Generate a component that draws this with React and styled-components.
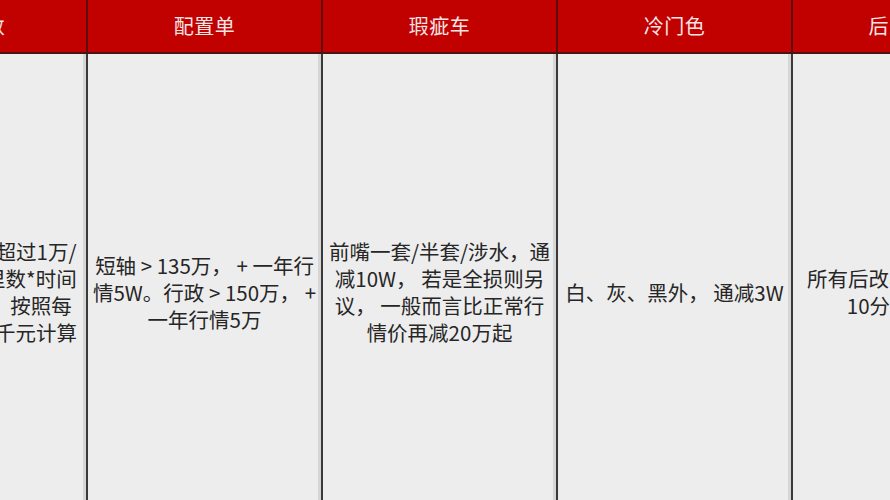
import React from "react";
import styled, { createGlobalStyle } from "styled-components";

const Global = createGlobalStyle`
  html, body { margin: 0; padding: 0; background: #ededed; }
  body { font-family: "Noto Sans CJK SC", "Noto Sans", sans-serif; }
`;

const Page = styled.div`
  width: 890px;
  height: 500px;
  overflow: hidden;
  background: #ededed;
`;

const Table = styled.div`
  display: grid;
  grid-template-columns: 225px repeat(4, 235px);
  grid-template-rows: 54px 480px;
  margin-left: -137px;
  width: max-content;
`;

const HeadCell = styled.div`
  background: #c10000;
  color: #f7e6e6;
  font-size: 20px;
  display: flex;
  align-items: center;
  justify-content: center;
  border-right: 2px solid #5e0d0d;
  border-bottom: 2px solid #4a1414;
  padding-bottom: 2px;
  box-sizing: border-box;
  letter-spacing: 0.5px;
`;

const BodyCell = styled.div`
  background: #ededed;
  color: #262626;
  font-size: 20.5px;
  line-height: 27px;
  display: flex;
  align-items: center;
  justify-content: center;
  text-align: center;
  white-space: nowrap;
  border-right: 2px solid #3a3a3a;
  box-shadow: inset -3px 0 0 #d6d6d6;
  box-sizing: border-box;
  padding: 0 6px 4px;
`;

const Lines = styled.div`
  display: flex;
  flex-direction: column;
  align-items: center;
`;

const columns = [
  {
    title: "公里数",
    lines: ["每年平均行驶超过1万/", "\u2002超出部分公里数*时间", "\u2002年减值折算，按照每", "万公里减值一千元计算"],
  },
  {
    title: "配置单",
    lines: ["短轴 > 135万，  + 一年行", "情5W。行政 > 150万，  +", "一年行情5万"],
  },
  {
    title: "瑕疵车",
    lines: ["前嘴一套/半套/涉水，通", "减10W，  若是全损则另", "议，  一般而言比正常行", "情价再减20万起"],
  },
  {
    title: "冷门色",
    lines: ["白、灰、黑外，  通减3W"],
  },
  {
    title: "后改装车",
    lines: ["所有后改车辆，车况扣", "10分以上处理"],
  },
];

export default function App() {
  return (
    <Page>
      <Global />
      <Table>
        {columns.map((c) => (
          <HeadCell key={"h" + c.title}>{c.title}</HeadCell>
        ))}
        {columns.map((c) => (
          <BodyCell key={"b" + c.title}>
            <Lines>
              {c.lines.map((l, i) => (
                <span key={i}>{l}</span>
              ))}
            </Lines>
          </BodyCell>
        ))}
      </Table>
    </Page>
  );
}
